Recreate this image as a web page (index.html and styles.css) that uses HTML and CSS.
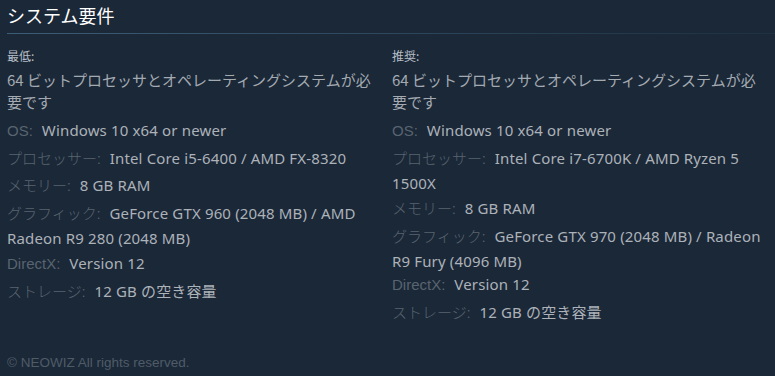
FILE: index.html
```html
<!DOCTYPE html>
<html lang="ja">
<head>
<meta charset="utf-8">
<link rel="stylesheet" href="styles.css">
</head>
<body>
<section class="sysreq">
  <h2 class="sysreq-title">システム要件</h2>
  <div class="cols">
    <div class="col">
      <div class="col-head">最低:</div>
      <ul class="req">
        <li class="req-first">64 ビットプロセッサとオペレーティングシステムが必要です</li>
        <li class="tall"><span class="lbl lat">OS:</span><span class="val">Windows 10 x64 or newer</span></li>
        <li class="tall"><span class="lbl">プロセッサー:</span><span class="val">Intel Core i5-6400 / AMD FX-8320</span></li>
        <li class="mid"><span class="lbl">メモリー:</span><span class="val">8 GB RAM</span></li>
        <li class="tall"><span class="lbl">グラフィック:</span><span class="val">GeForce GTX 960 (2048 MB) / AMD Radeon R9 280 (2048 MB)</span></li>
        <li><span class="lbl lat">DirectX:</span><span class="val">Version 12</span></li>
        <li class="tall"><span class="lbl">ストレージ:</span><span class="val">12 GB の空き容量</span></li>
      </ul>
    </div>
    <div class="col">
      <div class="col-head">推奨:</div>
      <ul class="req">
        <li class="req-first">64 ビットプロセッサとオペレーティングシステムが必要です</li>
        <li class="tall"><span class="lbl lat">OS:</span><span class="val">Windows 10 x64 or newer</span></li>
        <li class="tall"><span class="lbl">プロセッサー:</span><span class="val">Intel Core i7-6700K / AMD Ryzen 5 1500X</span></li>
        <li class="pull1"><span class="lbl">メモリー:</span><span class="val">8 GB RAM</span></li>
        <li class="tall"><span class="lbl">グラフィック:</span><span class="val">GeForce GTX 970 (2048 MB) / Radeon R9 Fury (4096 MB)</span></li>
        <li class="pull2"><span class="lbl lat">DirectX:</span><span class="val">Version 12</span></li>
        <li class="tall"><span class="lbl">ストレージ:</span><span class="val">12 GB の空き容量</span></li>
      </ul>
    </div>
  </div>
  <p class="legal">© NEOWIZ All rights reserved.</p>
</section>
</body>
</html>
```
FILE: styles.css
```css
html, body {
  margin: 0;
  padding: 0;
  background: #1b2838;
}
body {
  font-family: "Noto Sans", "Noto Sans CJK JP", sans-serif;
  color: #acb2b8;
}
.sysreq {
  padding: 0 0 0 7px;
}
.sysreq-title {
  margin: 0;
  padding: 4px 0 7px;
  font-family: "Noto Sans CJK JP", sans-serif;
  font-weight: normal;
  font-size: 18px;
  line-height: 22px;
  color: #ffffff;
  border-bottom: 1px solid transparent;
  border-image: linear-gradient(to right, #3c5d77 0%, #2a4257 60%, #1e3042 100%) 1;
}
.cols {
  display: grid;
  grid-template-columns: 377px 376px;
  column-gap: 8px;
  margin-top: 14px;
}
.col-head {
  font-family: "Noto Sans CJK JP", sans-serif;
  font-size: 12px;
  line-height: 16px;
  color: #b6bec6;
}
.req {
  list-style: none;
  margin: 5px 0 0;
  padding: 0;
  font-size: 15px;
  letter-spacing: 0.15px;
}
.req li {
  line-height: 25px;
}
.req li.tall {
  padding-top: 2px;
}
.req li.mid {
  padding-top: 1px;
}
.req li.pull1 {
  margin-top: -1px;
}
.req li.pull2 {
  margin-top: -2px;
}
.req li.req-first {
  font-family: "Noto Sans CJK JP", sans-serif;
  font-size: 15px;
  line-height: 22px;
  letter-spacing: 0;
  color: #a3aab1;
  margin-bottom: 3px;
}
.lbl {
  font-family: "Noto Sans CJK JP", sans-serif;
  font-weight: 300;
  letter-spacing: 0;
  color: #58646f;
  margin-right: 9px;
}
.lbl.lat {
  font-family: "Liberation Sans", sans-serif;
}
.val {
  color: #acb2b8;
}
.legal {
  margin: 30px 0 0;
  font-family: "Liberation Sans", sans-serif;
  font-size: 13.5px;
  color: #4f5b67;
}
```
